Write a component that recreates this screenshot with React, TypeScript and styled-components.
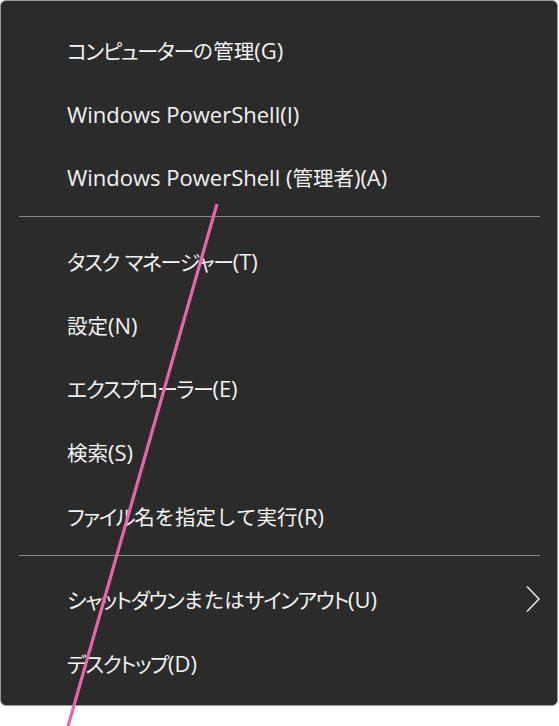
import React from 'react';
import styled, { createGlobalStyle } from 'styled-components';

const BG = '#2b2b2b';
const TEXT = '#f2f2f2';
const RULE = '#8c8c8c';

const Global = createGlobalStyle`
  html, body {
    margin: 0;
    padding: 0;
    background: #ffffff;
  }
  body {
    font-family: "Open Sans", "Noto Sans CJK JP", sans-serif;
  }
`;

const Page = styled.div`
  position: relative;
  width: 559px;
  height: 726px;
  overflow: hidden;
`;

const Menu = styled.div`
  box-sizing: border-box;
  width: 558px;
  height: 706px;
  background: ${BG};
  border: 1px solid #9a9a9a;
  border-radius: 6px;
  padding: 17px 0 10px;
  display: flex;
  flex-direction: column;
`;

const Item = styled.div`
  height: 64px;
  display: flex;
  align-items: center;
  justify-content: space-between;
  padding: 0 16px 0 66px;
  color: ${TEXT};
  font-size: 22px;
  white-space: nowrap;
`;

// kanji / hiragana: full width
const Kanji = styled.span`
  font-family: "Noto Sans CJK JP", sans-serif;
  font-size: 20.5px;
`;

// katakana is proportional in Yu Gothic UI
const Kana = styled.span`
  font-family: "Noto Sans CJK JP", sans-serif;
  font-size: 21px;
  font-feature-settings: "palt";
  letter-spacing: -1.4px;
`;

const Separator = styled.div`
  height: 1px;
  background: ${RULE};
  margin: 7px 17px 12px 18px;
`;

const Chevron = () => (
  <svg width="16" height="28" viewBox="0 0 16 28">
    <path d="M2 1.5 L14 14 L2 26.5" fill="none" stroke={TEXT} strokeWidth="1.4" />
  </svg>
);

const Overlay = styled.svg`
  position: absolute;
  left: 0;
  top: 0;
  pointer-events: none;
`;

const RUNS = /([\u30a0-\u30ff]+|[\u3000-\u309f\u4e00-\u9fff]+)/;
const KATAKANA = /^[\u30a0-\u30ff]/;

const Label = ({ text }: { text: string }) => (
  <span>
    {text.split(RUNS).map((part, i) => {
      if (i % 2 === 0) return part;
      return KATAKANA.test(part) ? <Kana key={i}>{part}</Kana> : <Kanji key={i}>{part}</Kanji>;
    })}
  </span>
);

const groups: { label: string; sub?: boolean }[][] = [
  [
    { label: 'コンピューターの管理(G)' },
    { label: 'Windows PowerShell(I)' },
    { label: 'Windows PowerShell (管理者)(A)' },
  ],
  [
    { label: 'タスク マネージャー(T)' },
    { label: '設定(N)' },
    { label: 'エクスプローラー(E)' },
    { label: '検索(S)' },
    { label: 'ファイル名を指定して実行(R)' },
  ],
  [
    { label: 'シャットダウンまたはサインアウト(U)', sub: true },
    { label: 'デスクトップ(D)' },
  ],
];

const App = () => (
  <Page>
    <Global />
    <Menu>
      {groups.map((g, gi) => (
        <React.Fragment key={gi}>
          {gi > 0 && <Separator />}
          {g.map((it) => (
            <Item key={it.label}>
              <Label text={it.label} />
              {it.sub && <Chevron />}
            </Item>
          ))}
        </React.Fragment>
      ))}
    </Menu>
    <Overlay width="559" height="726" viewBox="0 0 559 726">
      <line x1="217" y1="204" x2="67" y2="730" stroke="#e866a8" strokeWidth="3.2" />
    </Overlay>
  </Page>
);

export default App;
